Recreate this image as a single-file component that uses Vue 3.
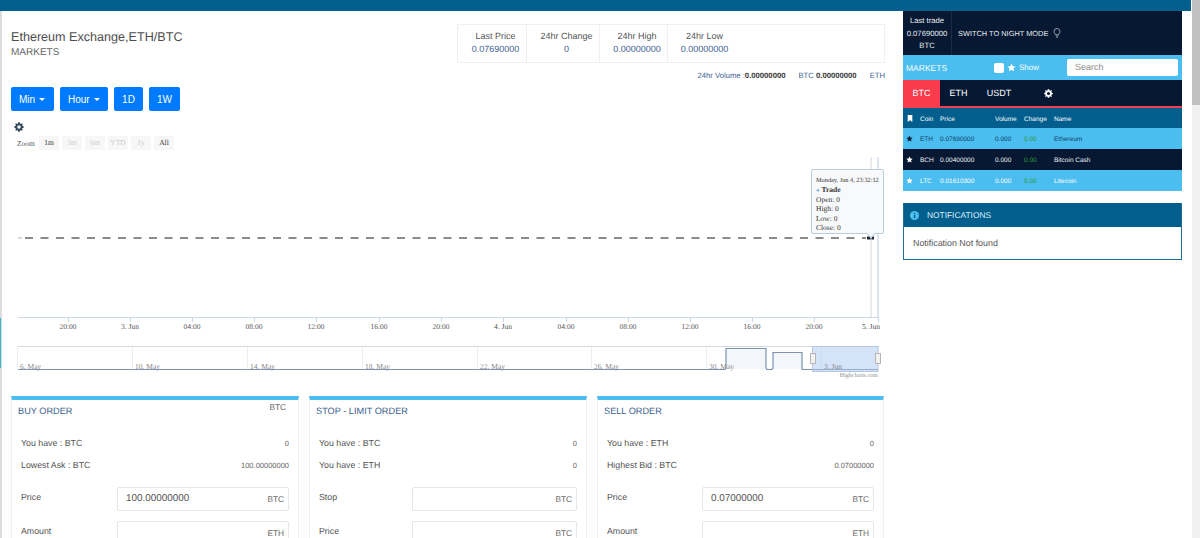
<script setup>
const stats = [
  { label: 'Last Price', value: '0.07690000' },
  { label: '24hr Change', value: '0' },
  { label: '24hr High', value: '0.00000000' },
  { label: '24hr Low', value: '0.00000000' }
]
const coins = [
  { coin: 'ETH', price: '0.07690000', name: 'Ethereum', cls: 'light first' },
  { coin: 'BCH', price: '0.00400000', name: 'Bitcoin Cash', cls: 'dark' },
  { coin: 'LTC', price: '0.01610300', name: 'Litecoin', cls: 'light' }
]
const hours = [
  [68, '20:00'], [130, '3. Jun'], [192, '04:00'], [254, '08:00'], [316, '12:00'], [379, '16:00'], [441, '20:00'],
  [503, '4. Jun'], [566, '04:00'], [628, '08:00'], [690, '12:00'], [752, '16:00'], [814, '20:00'], [878, '5. Jun', 871]
]
const nav = [
  [17, '6. May'], [132, '10. May'], [247, '14. May'], [362, '18. May'], [477, '22. May'], [591, '26. May'], [706, '30. May'], [821, '3. Jun']
]
const orders = [
  {
    title: 'BUY ORDER', corner: 'BTC',
    rows: [['You have : BTC', '0'], ['Lowest Ask : BTC', '100.00000000']],
    fields: [['Price', '100.00000000', 'BTC'], ['Amount', '', 'ETH']]
  },
  {
    title: 'STOP - LIMIT ORDER', corner: '',
    rows: [['You have : BTC', '0'], ['You have : ETH', '0']],
    fields: [['Stop', '', 'BTC'], ['Price', '', 'BTC']]
  },
  {
    title: 'SELL ORDER', corner: '',
    rows: [['You have : ETH', '0'], ['Highest Bid : BTC', '0.07000000']],
    fields: [['Price', '0.07000000', 'BTC'], ['Amount', '', 'ETH']]
  }
]
const gear = 'M8 5.2A2.8 2.8 0 1 0 8 10.8 2.8 2.8 0 0 0 8 5.2ZM6.7 0.5H9.3L9.7 2.4 11 3 12.700 1.900 14.100 3.300 13 5 13.600 6.300 15.500 6.700V9.300L13.600 9.700 13 11 14.100 12.700 12.700 14.100 11 13 9.700 13.600 9.300 15.500H6.700L6.300 13.600 5 13 3.300 14.100 1.900 12.700 3 11 2.400 9.700 0.500 9.300V6.700L2.400 6.300 3 5 1.900 3.300 3.300 1.900 5 3 6.300 2.400Z'
const star = 'M8 1l2.200 4.600 5 .7-3.600 3.500.9 5L8 12.400 3.500 14.800l.9-5L.8 6.300l5-.7z'
</script>

<template>
  <div class="page">
    <div class="frame">
      <div class="topbar"></div>
      <div class="content">
        <main class="main">
          <header class="head">
            <div class="title">
              <h1>Ethereum Exchange,ETH/BTC</h1>
              <p>MARKETS</p>
            </div>
            <div class="summary">
              <div class="stats">
                <div v-for="s in stats" :key="s.label" class="stat">
                  <span class="stat-label">{{ s.label }}</span>
                  <span class="stat-value">{{ s.value }}</span>
                </div>
              </div>
              <div class="volume">
                <span>24hr Volume :<b>0.00000000</b></span>
                <span>BTC <b>0.00000000</b></span>
                <span>ETH</span>
              </div>
            </div>
          </header>

          <div class="buttons">
            <button class="btn caret">Min</button>
            <button class="btn caret">Hour</button>
            <button class="btn">1D</button>
            <button class="btn">1W</button>
          </div>

          <svg class="gear" viewBox="0 0 16 16" width="10" height="10"><path :d="gear" fill="#33485a" fill-rule="evenodd" /></svg>

          <div class="zoom">
            <span class="zoom-label">Zoom</span>
            <span class="rng on">1m</span>
            <span class="rng">3m</span>
            <span class="rng">6m</span>
            <span class="rng">YTD</span>
            <span class="rng">1y</span>
            <span class="rng on">All</span>
          </div>

          <div class="chart">
            <svg width="885" height="232" viewBox="0 0 885 232" class="chart-svg">
              <line x1="18" x2="22" y1="84" y2="84" stroke="#ccc" stroke-width="1.500" />
              <line x1="25" x2="866" y1="84" y2="84" stroke="#666" stroke-width="1.500" stroke-dasharray="8 7.500" />
              <rect x="867" y="82.500" width="7" height="3" fill="#1b2430" />
              <line x1="871" x2="871" y1="3" y2="163" stroke="#d3d8de" />
              <line x1="878" x2="878" y1="3" y2="163" stroke="#b9cbe4" />
              <line x1="18" x2="879" y1="163.500" y2="163.500" stroke="#ccd6eb" />
              <g v-for="h in hours" :key="h[0]">
                <line :x1="h[0] + 0.5" :x2="h[0] + 0.5" y1="164" y2="168" stroke="#ccd6eb" />
                <text :x="h[2] || h[0]" y="175" class="ax">{{ h[1] }}</text>
              </g>
              <line x1="18" x2="879" y1="192.500" y2="192.500" stroke="#d5d9df" />
              <line v-for="n in nav" :key="n[0]" :x1="n[0] + 0.5" :x2="n[0] + 0.5" y1="193" y2="215" stroke="#eceef1" />
              <path d="M726 215V194H766V215H773V198.500H802V215Z" fill="#f3f6fb" />
              <path d="M18 215.500H724Q726 215.500 726 213V194.500H766V213Q766 215.500 768 215.500H771Q773 215.500 773 213V198.500H802V215.500H878" fill="none" stroke="#7d93b2" stroke-width="1.200" />
              <rect x="812.500" y="192.500" width="65.500" height="25" fill="#a9c8f0" fill-opacity="0.5" stroke="#b6c6de" />
              <text v-for="n in nav" :key="n[1]" :x="n[0] + 3" y="215" class="nv">{{ n[1] }}</text>
              <rect x="810.500" y="199.500" width="5" height="10" fill="#f2f2f2" stroke="#b5b5b5" />
              <rect x="875.500" y="199.500" width="5" height="10" fill="#f2f2f2" stroke="#b5b5b5" />
              <text x="878" y="223" class="credit">Highcharts.com</text>
            </svg>
            <div class="tip">
              <div class="tip-date">Monday, Jun 4, 23:32:12</div>
              <div class="tip-line"><i>●</i> <b>Trade</b></div>
              <div class="tip-line">Open: 0</div>
              <div class="tip-line">High: 0</div>
              <div class="tip-line">Low: 0</div>
              <div class="tip-line">Close: 0</div>
            </div>
          </div>

          <section class="orders">
            <article v-for="o in orders" :key="o.title" class="order">
              <div class="order-head">
                <h2>{{ o.title }}</h2>
                <span class="corner">{{ o.corner }}</span>
              </div>
              <div class="order-rows">
                <div v-for="r in o.rows" :key="r[0]" class="order-row">
                  <span>{{ r[0] }}</span>
                  <small>{{ r[1] }}</small>
                </div>
              </div>
              <div v-for="f in o.fields" :key="f[0]" class="field">
                <label>{{ f[0] }}</label>
                <div class="input">
                  <span class="input-value">{{ f[1] }}</span>
                  <span class="unit">{{ f[2] }}</span>
                </div>
              </div>
            </article>
          </section>
        </main>

        <aside class="side">
          <div class="trade">
            <div class="last">
              <span>Last trade</span>
              <span>0.07690000</span>
              <span>BTC</span>
            </div>
            <div class="night">
              SWITCH TO NIGHT MODE
              <svg viewBox="0 0 16 20" width="8" height="10" fill="none" stroke="#dfe5ea" stroke-width="1.300">
                <path d="M5 13.500C4.500 11.500 2 10.500 2 7a6 6 0 0 1 12 0c0 3.500-2.500 4.500-3 6.500Z" />
                <path d="M5.500 16h5M6.500 18.500h3" />
              </svg>
            </div>
          </div>
          <div class="market-bar">
            <span class="mk-title">MARKETS</span>
            <span class="check"></span>
            <svg viewBox="0 0 16 16" width="9" height="9"><path :d="star" fill="#fff" /></svg>
            <span class="show">Show</span>
            <div class="search">Search</div>
          </div>
          <nav class="tabs">
            <span class="tab active">BTC</span>
            <span class="tab">ETH</span>
            <span class="tab">USDT</span>
            <svg class="tab-gear" viewBox="0 0 16 16" width="9" height="9"><path :d="gear" fill="#fff" fill-rule="evenodd" /></svg>
          </nav>
          <div class="thead">
            <svg viewBox="0 0 10 12" width="6" height="7"><path d="M1 0h8v12L5 9 1 12z" fill="#fff" /></svg>
            <span class="c-coin">Coin</span>
            <span class="c-price">Price</span>
            <span class="c-vol">Volume</span>
            <span class="c-chg">Change</span>
            <span class="c-name">Name</span>
          </div>
          <div v-for="c in coins" :key="c.coin" class="trow" :class="c.cls">
            <svg viewBox="0 0 16 16" width="7" height="7"><path :d="star" /></svg>
            <span class="c-coin">{{ c.coin }}</span>
            <span class="c-price">{{ c.price }}</span>
            <span class="c-vol">0.000</span>
            <span class="c-chg green">0.00</span>
            <span class="c-name">{{ c.name }}</span>
          </div>

          <section class="notes">
            <div class="notes-head">
              <svg viewBox="0 0 16 16" width="9" height="9"><circle cx="8" cy="8" r="8" fill="#4bbdee" /><rect x="7" y="7" width="2.400" height="5.500" fill="#025e8c" /><rect x="7" y="3.500" width="2.400" height="2.200" fill="#025e8c" /></svg>
              <span>NOTIFICATIONS</span>
            </div>
            <div class="notes-body">Notification Not found</div>
          </section>
        </aside>
      </div>
    </div>
    <div class="scroll"><div class="thumb"></div></div>
  </div>
</template>

<style>
html, body { margin: 0; height: 100%; overflow: hidden; background: #fff; }
</style>

<style scoped>
.page {
  display: flex;
  width: 1200px;
  height: 538px;
  overflow: hidden;
  background: #fff;
  font-family: "Liberation Sans", Arial, sans-serif;
  color: #555;
  text-rendering: geometricPrecision;
}
.frame { width: 1192px; flex: none; }
.topbar { height: 11px; margin-right: 1px; background: #025e8c; }
.content { display: flex; height: 527px; }
.main {
  position: relative;
  width: 903px;
  flex: none;
  box-sizing: border-box;
  padding-left: 9px;
  border-left: 2px solid #ddd;
}
.main::before {
  content: ""; position: absolute; left: -2px; top: 307px; width: 1px; height: 50px; background: #39b4c4;
}
.head { display: flex; justify-content: space-between; height: 72px; padding: 13px 18px 0 0; box-sizing: border-box; }
.title h1 { margin: 5px 0 0; font-size: 12.600px; font-weight: 400; line-height: 17px; color: #4d4d4d; }
.title p { margin: 0; font-size: 10px; line-height: 14px; color: #666; }
.summary { width: 428px; }
.stats { display: flex; height: 39px; border: 1px solid #f0f0f0; box-sizing: border-box; }
.stat {
  display: flex; flex-direction: column; align-items: center; box-sizing: border-box;
  width: 69px; padding: 5px 0 0 7px; border-right: 1px solid #f0f0f0;
  font-size: 9px; line-height: 13px;
}
.stat:nth-child(2) { width: 73px; }
.stat:nth-child(3) { width: 68px; }
.stat:nth-child(4) { width: 66px; border: 0; }
.stat-label { white-space: nowrap; color: #555; }
.stat-value { white-space: nowrap; color: #3f5f94; }
.volume {
  display: flex; justify-content: flex-end; gap: 13px;
  font-size: 7.700px; line-height: 10px; margin-top: 8px; color: #3f5f94; white-space: nowrap;
}
.volume b { color: #333; }
.buttons { display: flex; gap: 6px; margin-top: 4px; }
.btn {
  height: 24px; padding: 0; border: 0; border-radius: 2px;
  background: #007bff; color: #fff; font: 10px "Liberation Sans", Arial, sans-serif;
}
.btn:nth-child(3) { width: 29px; }
.btn:nth-child(4) { width: 31px; }
.btn.caret { display: flex; align-items: center; padding-left: 8px; gap: 4px; box-sizing: border-box; }
.btn.caret:nth-child(1) { width: 43px; }
.btn.caret:nth-child(2) { width: 48px; }
.btn.caret::after {
  content: ""; border-top: 3px solid #fff; border-left: 3px solid transparent; border-right: 3px solid transparent;
}
.gear { display: block; margin: 11px 0 0 3px; }
.zoom { display: flex; gap: 3px; margin: 4px 0 0 6px; font-family: "Liberation Serif", serif; font-size: 7.500px; align-items: center; height: 14px; }
.zoom-label { color: #555; width: 19px; }
.rng { width: 20px; height: 14px; line-height: 13px; text-align: center; background: #f7f7f7; color: #ccc; }
.rng.on { color: #333; }
.chart { position: relative; margin-left: -11px; height: 232px; margin-top: 4px; }
.chart-svg { display: block; }
.ax { font: 7.500px "Liberation Serif", serif; fill: #555; text-anchor: middle; }
.nv { font: 7.500px "Liberation Serif", serif; fill: #888; }
.credit { font: 6px "Liberation Serif", serif; fill: #888; text-anchor: end; }
.tip {
  position: absolute; left: 811px; top: 15px; width: 73px; height: 65px; box-sizing: border-box;
  padding: 6px 4px 0; background: #f8f9fa; border: 1px solid #b9cfe0; border-radius: 2px;
  font: 7.500px/9.400px "Liberation Serif", serif; color: #333; white-space: nowrap;
}
.tip::after {
  content: ""; position: absolute; right: 9px; bottom: -4px; width: 5px; height: 5px;
  background: #f8f9fa; border-right: 1px solid #b9cfe0; border-bottom: 1px solid #b9cfe0; transform: rotate(45deg);
}
.tip-date { font-size: 6.300px; line-height: 9.400px; height: 9.400px; }
.tip-line { height: 9.400px; }
.tip i { color: #7cb5ec; font-style: normal; font-size: 6px; line-height: 0; }
.orders { display: grid; grid-template-columns: 288px 278px 287px; gap: 10px; margin-top: 10px; }
.order {
  height: 170px; box-sizing: border-box;
  border: 1px solid #eef0f2; border-top: 4px solid #4bbdee; padding: 4px 9px 0 6px;
}
.order-head { display: flex; justify-content: space-between; height: 24px; }
.order h2 { margin: 0; font-size: 9.200px; line-height: 14px; font-weight: 400; color: #3d5f8f; }
.corner { font-size: 8.300px; line-height: 10px; margin-top: -2px; padding-right: 3px; color: #666; }
.order-rows { padding: 4px 0 6px 3px; }
.order-row { display: flex; justify-content: space-between; align-items: center; height: 22px; font-size: 8.800px; }
.order-row small { font-size: 7.500px; color: #666; }
.field { display: flex; align-items: center; height: 33.700px; padding-left: 3px; font-size: 8.800px; }
.field label { width: 96px; flex: none; margin-top: -3px; }
.order:nth-child(2) label { width: 92.600px; }
.order:nth-child(3) label { width: 95px; }
.input {
  flex: 1; height: 24px; box-sizing: border-box; display: flex; justify-content: space-between; align-items: center;
  padding: 0 4px 0 8px; border: 1px solid #e6e6e6; border-radius: 2px; font-size: 9.900px; color: #555;
}
.unit { font-size: 8.300px; color: #666; }
.side { width: 279px; flex: none; font-size: 8px; }
.trade { display: flex; height: 44px; background: #061832; color: #e6ebf0; }
.last {
  width: 49px; display: flex; flex-direction: column; align-items: center; justify-content: center;
  padding-top: 2px; box-sizing: border-box;
  font-size: 7.700px; line-height: 12.500px; border-right: 1px solid #1c2c47; white-space: nowrap;
}
.night { display: flex; align-items: flex-start; gap: 5px; padding: 17px 0 0 6px; font-size: 7.400px; line-height: 11px; }
.market-bar { display: flex; align-items: center; height: 25px; background: #4bbdee; color: #fff; }
.mk-title { width: 88px; padding-left: 3px; font-size: 8.500px; }
.check { width: 10px; height: 10px; border-radius: 2px; background: #fff; margin-right: 3px; }
.show { font-size: 8px; margin-left: 3px; width: 48px; }
.search {
  width: 111px; height: 17px; line-height: 17px; padding-left: 8px; box-sizing: border-box;
  background: #fff; border-radius: 2px; color: #888; font-size: 9px;
}
.tabs { display: flex; align-items: center; height: 26px; background: #061832; color: #fff; font-size: 9px; border-bottom: 2px solid #f04050; }
.tab { width: 37px; text-align: center; height: 26px; line-height: 26px; }
.tab.active { background: #f93b4b; }
.tab:nth-child(3) { width: 44px; }
.tab-gear { margin-left: 23px; }
.thead, .trow { display: flex; align-items: center; box-sizing: border-box; height: 21px; padding-top: 2px; font-size: 6.500px; }
.thead { background: #025e8c; color: #fff; height: 20px; padding-left: 4px; }
.trow { padding-left: 3px; }
.thead svg, .trow svg { margin-top: -2px; }
.light { background: #4bbdee; color: #fff; }
.light svg { fill: #fff; }
.light.first { color: #0b3f67; }
.light.first svg { fill: #07233f; }
.dark { background: #061832; color: #eef2f5; }
.dark svg { fill: #fff; }
.c-coin { margin-left: 7px; width: 20px; }
.c-price { width: 55px; }
.c-vol { width: 29px; }
.c-chg { width: 30px; }
.green { color: #2e9b38; }
.notes { margin-top: 12px; border: 1px solid #1f6c96; border-top: 0; }
.notes-head { display: flex; align-items: center; gap: 8px; height: 24px; padding-left: 6px; background: #025e8c; color: #dff1fb; font-size: 8.400px; }
.notes-body { height: 32px; padding: 11px 9px 0; box-sizing: border-box; font-size: 8.900px; color: #555; }
.scroll { flex: none; width: 8px; background: #f1f1f1; }
.thumb { height: 105px; background: #c1c1c1; }
</style>
